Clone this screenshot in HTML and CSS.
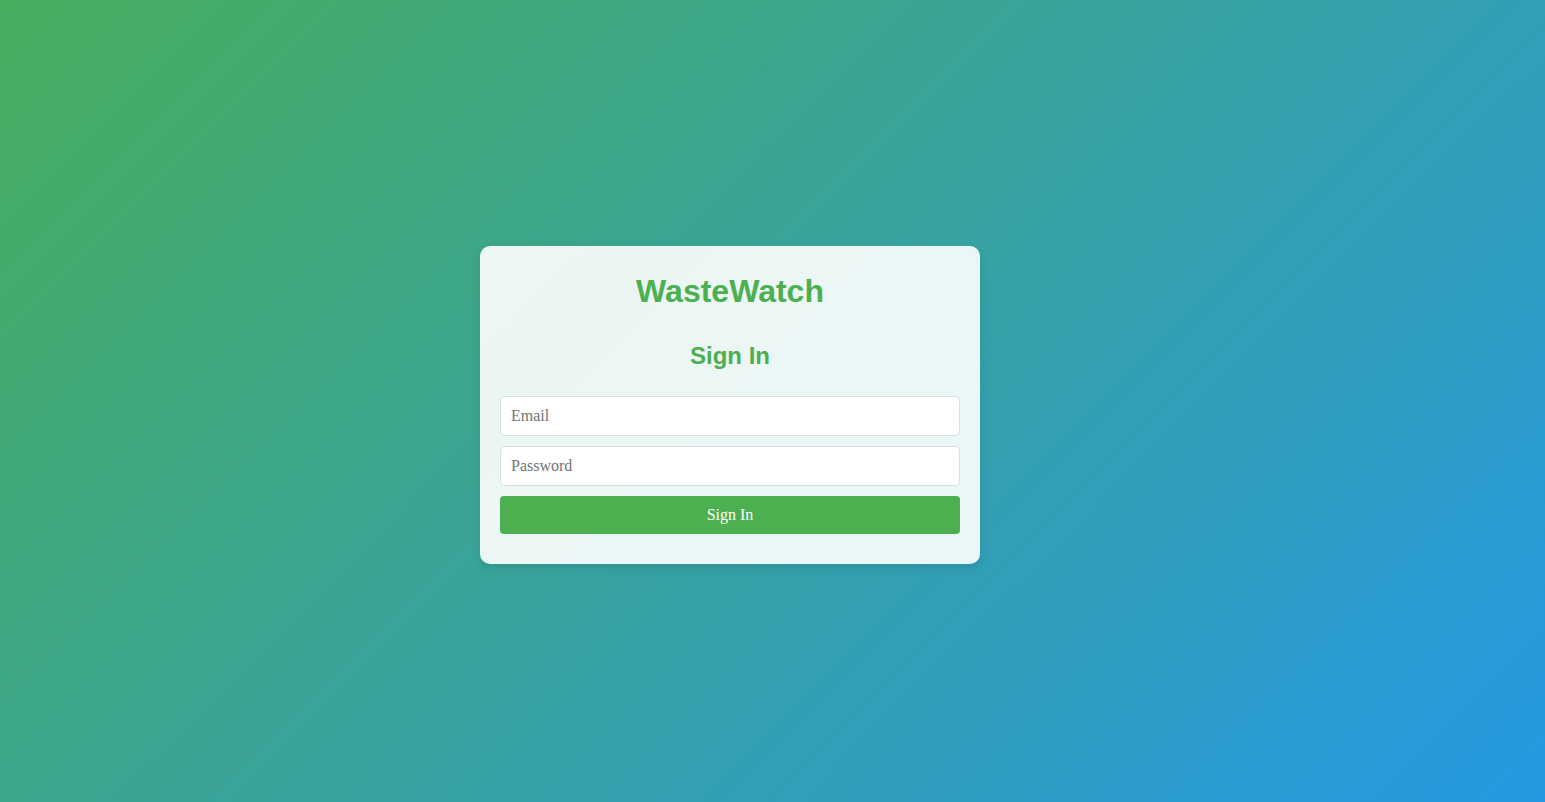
FILE: index.html
```html
<!DOCTYPE html>
<html lang="en">
<head>
<meta charset="utf-8">
<title>WasteWatch - Sign In</title>
<link rel="stylesheet" href="styles.css">
</head>
<body>
<main class="page">
  <section class="card">
    <h1 class="brand">WasteWatch</h1>
    <h2 class="heading">Sign In</h2>
    <form class="form">
      <input class="field" type="email" placeholder="Email">
      <input class="field" type="password" placeholder="Password">
      <button class="submit" type="button">Sign In</button>
    </form>
  </section>
</main>
</body>
</html>
```

FILE: styles.css
```css
html, body {
  margin: 0;
  padding: 0;
  height: 100%;
}

body {
  background: linear-gradient(135deg, #4CAF50 -10%, #2196F3 112%);
  font-family: "Liberation Serif", "Times New Roman", serif;
}

.page {
  box-sizing: border-box;
  min-height: 100vh;
  display: flex;
  align-items: center;
  justify-content: center;
  padding: 8px 85px 0 0;
}

.card {
  box-sizing: border-box;
  width: 500px;
  padding: 27px 20px 30px;
  background: rgba(255, 255, 255, 0.9);
  border-radius: 10px;
  box-shadow: 0 4px 10px rgba(0, 0, 0, 0.1);
}

.brand {
  margin: 0 0 32px;
  font-family: "Liberation Sans", Arial, sans-serif;
  font-size: 32px;
  font-weight: bold;
  text-align: center;
  color: #4CAF50;
}

.heading {
  margin: 0 0 26px;
  font-family: "Liberation Sans", Arial, sans-serif;
  font-size: 24px;
  font-weight: bold;
  text-align: center;
  color: #4CAF50;
}

.form {
  display: flex;
  flex-direction: column;
  gap: 10px;
}

.field {
  box-sizing: border-box;
  width: 100%;
  height: 40px;
  padding: 10px;
  border: 1px solid #ddd;
  border-radius: 5px;
  background: #fff;
  font-family: "Liberation Serif", "Times New Roman", serif;
  font-size: 16px;
  color: #333;
  outline: none;
}

.field::placeholder {
  color: #757575;
}

.submit {
  box-sizing: border-box;
  width: 100%;
  height: 38px;
  padding: 10px;
  border: none;
  border-radius: 4px;
  background: #4CAF50;
  color: #fff;
  font-family: "Liberation Serif", "Times New Roman", serif;
  font-size: 16px;
  cursor: pointer;
}
```
